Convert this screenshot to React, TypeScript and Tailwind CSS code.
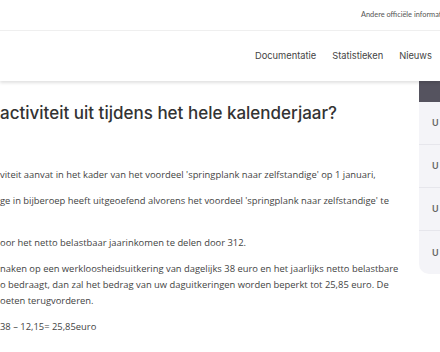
import React from "react";

const navLinks = ["Documentatie", "Statistieken", "Nieuws"];

const paragraphs = [
  ["viteit aanvat in het kader van het voordeel 'springplank naar zelfstandige' op 1 januari,"],
  ["ge in bijberoep heeft uitgeoefend alvorens het voordeel 'springplank naar zelfstandige' te", ""],
  ["oor het netto belastbaar jaarinkomen te delen door 312."],
  [
    "naken op een werkloosheidsuitkering van dagelijks 38 euro en het jaarlijks netto belastbare",
    "o bedraagt, dan zal het bedrag van uw daguitkeringen worden beperkt tot 25,85 euro. De",
    "oeten terugvorderen.",
  ],
  ["38 – 12,15= 25,85euro"],
];

const App = () => {
  return (
    <div className="w-[440px] h-[352px] overflow-hidden bg-white relative">
      <div className="h-[31px] border-b border-[#f0f0f0] flex items-center pl-[361px] whitespace-nowrap overflow-hidden">
        <span className="text-[7.4px] text-[#555] font-['Lato',sans-serif]">
          Andere officiële informatie
        </span>
      </div>
      <div className="h-[50px] relative z-10 bg-white shadow-[0_2px_3px_rgba(0,0,0,0.12)] flex items-center pl-[255px] gap-[16px] whitespace-nowrap font-['Inter',sans-serif]">
        {navLinks.map((link) => (
          <span key={link} className="text-[9.3px] text-[#444]">
            {link}
          </span>
        ))}
      </div>
      <div className="flex">
        <div className="w-[419px] shrink-0 pt-[20px] whitespace-nowrap overflow-hidden">
          <h1 className="text-[17px] leading-[24px] font-medium text-[#333] font-['Inter',sans-serif]">
            activiteit uit tijdens het hele kalenderjaar?
          </h1>
          <div className="mt-[42px] flex flex-col gap-[10px] text-[9.4px] leading-[16px] text-[#444] font-['Open_Sans',sans-serif]">
            {paragraphs.map((lines, i) => (
              <p key={i}>
                {lines.map((line, j) => (
                  <span key={j} className="block h-[16px]">
                    {line}
                  </span>
                ))}
              </p>
            ))}
          </div>
        </div>
        <div className="w-[21px] shrink-0 flex flex-col">
          <div className="h-[21px] bg-[#55535f]" />
          {[0, 1, 2, 3].map((i) => (
            <div
              key={i}
              className={`h-[43px] bg-[#f4f4f8] flex items-center pl-[13px] text-[9px] font-semibold text-[#666] font-['Inter',sans-serif] ${
                i < 3 ? "border-b border-[#e6e6ec]" : "rounded-bl-[10px]"
              }`}
            >
              U
            </div>
          ))}
        </div>
      </div>
    </div>
  );
};

export default App;
